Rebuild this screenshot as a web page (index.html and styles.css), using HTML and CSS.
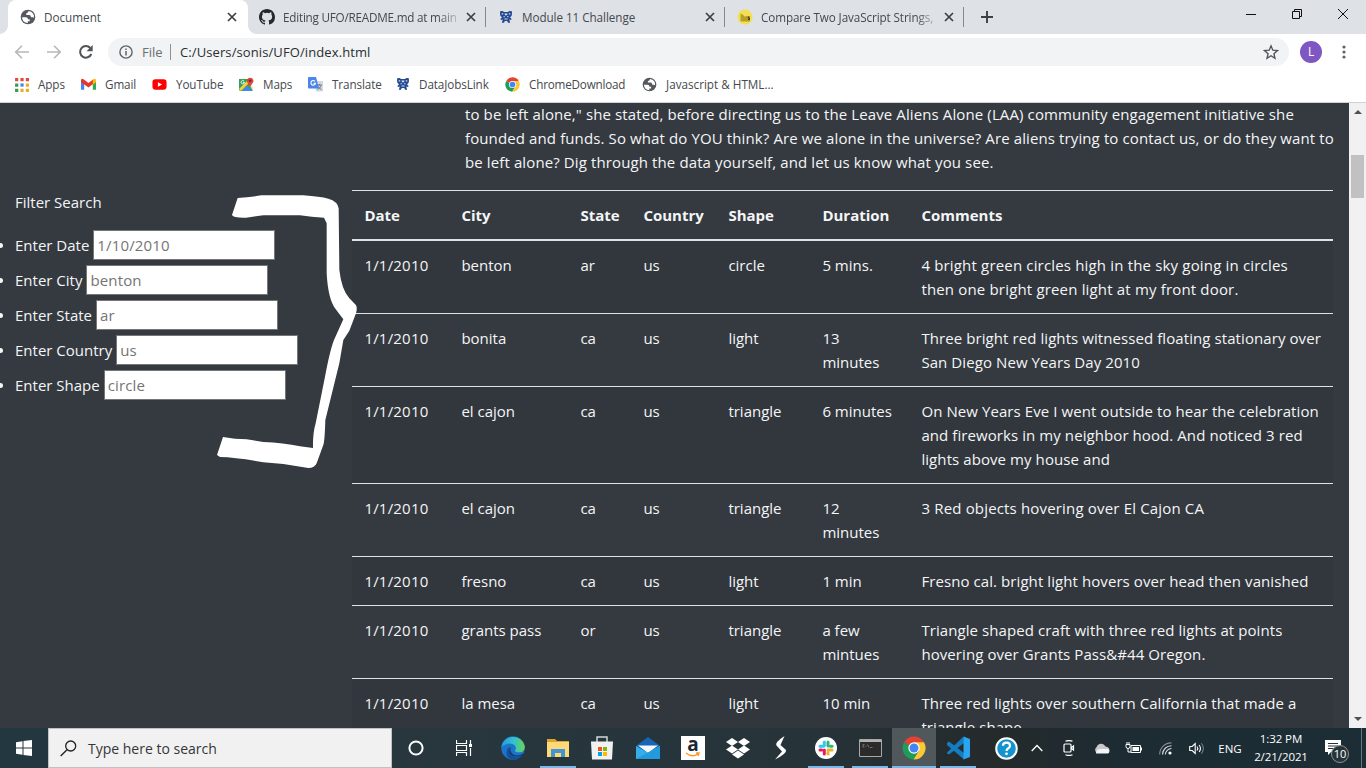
FILE: index.html
```html
<!DOCTYPE html>
<html lang="en">
<head>
<meta charset="utf-8">
<title>Document</title>
<link rel="stylesheet" href="styles.css">
</head>
<body>
<svg class="defs" width="0" height="0">
  <symbol id="globe" viewBox="0 0 16 16"><circle cx="8" cy="8" r="7.300" fill="#55595d"/><path d="M8.500 2.200Q11 2 11.800 3L10.500 4.500Q11 5.800 12.200 6.300L14 6.600Q14.400 9.500 12.700 11.500 12 10.200 10.500 10.300V8.600Q10.300 7.900 9.500 7.900H6.200V6.400H7.700V4.900H9Q9.800 4.700 9.800 4Z" fill="#fff" opacity="0"/><path d="M2 8.200H5.800Q8 8.300 8 10.300H9.700V12.200H7.800V14Q2.600 13.700 2 8.200ZM8.600 2.100Q8.300 4.200 6.300 4.200V5.900H9.500Q10.900 6.200 11 8.300H12.500Q13.500 8.500 13.900 8.800 14.400 6.300 13 4.600 11.500 2.500 8.600 2.100Z" fill="#fff"/></symbol>
  <symbol id="xmark" viewBox="0 0 10 10"><path d="m1 1 8 8M9 1 1 9" stroke="#3c4043" stroke-width="1.700" fill="none"/></symbol>
  <symbol id="robot" viewBox="0 0 14 14"><path d="M1.200 1.200Q4 .5 5 2h4q1-1.500 3.800-.8.500 3-.3 4.800L11 7.200l1.800 2-1.300.8-1-.8v1.300l.7 2.300H9L8.200 11H5.800L5 12.800H2.800l.7-2.300V9.200l-1 .8-1.300-.8 1.800-2L1.500 6Q.7 4.200 1.200 1.200Z" fill="#26488f"/><path d="M2.700 3.300h1.500v1.200H2.700zm7.100 0h1.500v1.200H9.800zM5.500 3.500h3l-.5 1.700H6zM4.500 6.300h1.400v1H4.500zm3.600 0h1.400v1H8.100zM5.500 8.500h3v1h-3z" fill="#d3e2f8"/></symbol>
  <symbol id="chrome" viewBox="0 0 24 24"><path d="M12 12 2.040 6.250A11.500 11.500 0 0 1 21.960 6.250Z" fill="#e34235"/><path d="M12 12 2.040 6.250A11.500 11.500 0 0 0 11.500 23.500L16.800 14.800Z" fill="#1f9d58"/><path d="M12 6.300h9.990A11.500 11.500 0 0 1 11.500 23.500L17 14.800Z" fill="#fcc934"/><circle cx="12" cy="12" r="5.700" fill="#fff"/><circle cx="12" cy="12" r="4.500" fill="#4285f4"/></symbol>
</svg>

<header class="tabs">
  <div class="tab active"><svg class="fav"><use href="#globe"/></svg><span class="tab-title t-doc">Document</span><svg class="close"><use href="#xmark"/></svg></div>
  <div class="tab"><svg class="fav" viewBox="0 0 16 16"><path fill="#24292e" d="M8 0C3.580 0 0 3.580 0 8c0 3.540 2.290 6.530 5.470 7.590.4.070.55-.17.55-.38v-1.490c-2.010.37-2.530-.49-2.690-.94-.09-.23-.48-.94-.82-1.130-.28-.15-.68-.52-.01-.53.63-.01 1.080.58 1.230.82.72 1.210 1.870.87 2.330.66.070-.52.280-.87.510-1.070-1.780-.2-3.640-.89-3.640-3.950 0-.87.310-1.590.82-2.150-.08-.2-.36-1.020.08-2.120 0 0 .67-.21 2.200.82a7.600 7.600 0 0 1 4 0c1.530-1.040 2.200-.82 2.200-.82.440 1.100.16 1.920.08 2.120.51.56.82 1.270.82 2.150 0 3.070-1.870 3.750-3.650 3.950.29.25.54.73.54 1.480v2.200c0 .21.150.46.550.38A8.010 8.010 0 0 0 16 8c0-4.420-3.580-8-8-8Z"/></svg><span class="tab-title t-git">Editing UFO/README.md at main</span><svg class="close"><use href="#xmark"/></svg></div>
  <div class="tab"><svg class="fav small"><use href="#robot"/></svg><span class="tab-title t-mod">Module 11 Challenge</span><svg class="close"><use href="#xmark"/></svg></div>
  <div class="tab"><svg class="fav" viewBox="0 0 16 16"><circle cx="8" cy="8" r="7.500" fill="#f3df55"/><path d="M3.500 4.500 6 5.800 8 8 9 6.800 13 8v4.500H3.500Z" fill="#b5a02c"/><path d="M12.600 7.800h-1.300v1.300h1.200v1.400H11" stroke="#37310b" stroke-width=".9" fill="none"/></svg><span class="tab-title t-cmp">Compare Two JavaScript Strings,</span><svg class="close"><use href="#xmark"/></svg></div>
  <svg class="plus" viewBox="0 0 12 12"><path d="M6 0v12M0 6h12" stroke="#3c4043" stroke-width="1.900"/></svg>
  <div class="win">
    <svg viewBox="0 0 12 12"><path d="M1 6.500h10" stroke="#111"/></svg>
    <svg viewBox="0 0 12 12"><path d="M1.500 3.500h7v7h-7zM3.500 3V1.500h7v7H9" fill="none" stroke="#111"/></svg>
    <svg viewBox="0 0 12 12"><path d="m1 1 10 10M11 1 1 11" stroke="#111" fill="none"/></svg>
  </div>
</header>

<div class="toolbar">
  <svg class="nav" viewBox="0 0 16 16"><path d="M15 8H2M8 1.700 1.700 8 8 14.300" fill="none" stroke="#b6b8bb" stroke-width="1.600"/></svg>
  <svg class="nav" viewBox="0 0 16 16"><path d="M1 8h13M8 1.700 14.300 8 8 14.300" fill="none" stroke="#b6b8bb" stroke-width="1.600"/></svg>
  <svg class="nav" viewBox="0 0 16 16"><path d="M13.300 10A5.800 5.800 0 1 1 12.300 4" fill="none" stroke="#505357" stroke-width="2"/><path d="M14.700 1v6.300H8.500Z" fill="#505357"/></svg>
  <div class="omnibox">
    <svg class="info" viewBox="0 0 14 14"><circle cx="7" cy="7" r="6.100" fill="none" stroke="#5f6368" stroke-width="1.400"/><path d="M7 6v4.500M7 3.400v1.500" stroke="#5f6368" stroke-width="1.500"/></svg>
    <span class="scheme">File</span><span class="address">C:/Users/sonis/UFO/index.html</span>
    <svg class="star" viewBox="0 0 24 24"><path d="m12 2.800 2.700 6.500 7 .6-5.300 4.600 1.600 6.900-6-3.700-6 3.700 1.600-6.900L2.300 9.900l7-.6Z" fill="none" stroke="#505357" stroke-width="2"/></svg>
  </div>
  <div class="avatar">L</div>
  <svg class="dots" viewBox="0 0 4 14"><circle cx="2" cy="2" r="1.600"/><circle cx="2" cy="7" r="1.600"/><circle cx="2" cy="12" r="1.600"/></svg>
</div>

<nav class="bookmarks">
  <a class="bm b1"><svg viewBox="0 0 14 14"><path d="M1 1h3v3H1zM6 1h3v3H6zM11 1h3v3h-3z" fill="#df4b3f"/><path d="M1 6h3v3H1zM1 11h3v3H1z" fill="#3a9b57"/><path d="M6 6h3v3H6z" fill="#4285f4"/><path d="M11 6h3v3h-3zM6 11h3v3H6zM11 11h3v3h-3z" fill="#e8b12c"/></svg><span>Apps</span></a>
  <a class="bm b2"><svg viewBox="0 0 14 14"><path d="M0 3v9h3V4Z" fill="#4285f4"/><path d="M14 3v9h-3V4Z" fill="#34a853"/><path d="M0 3q.3-2 2.400-1L7 5.500 11.600 2v4.300L7 9.800 0 4.800Z" fill="#e2382d"/><path d="M11 2.500q2.500-2 3 .5v2l-3 2.200Z" fill="#fbbc04"/></svg><span>Gmail</span></a>
  <a class="bm b3"><svg viewBox="0 0 16 12"><rect x=".5" y=".5" width="15" height="11" rx="3" fill="#f00"/><path d="m6.300 3.500 4.500 2.500-4.500 2.500Z" fill="#fff"/></svg><span>YouTube</span></a>
  <a class="bm b4"><svg viewBox="0 0 15 15"><path d="M0 2h11v6l3 6H1l-1-1Z" fill="#34a05a"/><path d="m3 14 5-5 5 5Z" fill="#4285f4"/><path d="M0 12 9 3l2 2-9 9Z" fill="#f7cf46"/><path d="m10 7 4 3v4Z" fill="#ddd"/><path d="M11 10 8 5a3.300 3.300 0 1 1 6.300 0Z" fill="#df4939"/><circle cx="11.200" cy="3.800" r="1.300" fill="#7d251d"/><path d="M5 4a1.700 1.700 0 1 0 .5 1.400H4" fill="none" stroke="#fff" stroke-width=".9"/></svg><span>Maps</span></a>
  <a class="bm b5"><svg viewBox="0 0 15 15"><path d="M6 4h9v10.500H8Z" fill="#d5d8dc"/><path d="M9 8h5M11.500 7v1.500m1.500 0q-1 3-3.500 4m.5-3q1.500 2.500 3.500 3" stroke="#65727f" stroke-width=".9" fill="none"/><path d="M1 0h7l3 11.500H1q-1 0-1-1V1q0-1 1-1Z" fill="#4a84ec"/><path d="M7 4.300a2.300 2.300 0 1 0 .5 2H5.400" stroke="#fff" stroke-width="1.100" fill="none"/></svg><span>Translate</span></a>
  <a class="bm b6"><svg><use href="#robot"/></svg><span>DataJobsLink</span></a>
  <a class="bm b7"><svg><use href="#chrome"/></svg><span>ChromeDownload</span></a>
  <a class="bm b8"><svg><use href="#globe"/></svg><span>Javascript &amp; HTML...</span></a>
</nav>

<main class="viewport">
  <div class="page">
    <p class="article">to be left alone," she stated, before directing us to the Leave Aliens Alone (LAA) community engagement initiative she<br>founded and funds. So what do YOU think? Are we alone in the universe? Are aliens trying to contact us, or do they want to<br>be left alone? Dig through the data yourself, and let us know what you see.</p>
    <div class="columns">
      <form class="filters">
        <p>Filter Search</p>
        <ul>
          <li><label for="date">Enter Date</label><input id="date" placeholder="1/10/2010"></li>
          <li><label for="city">Enter City</label><input id="city" placeholder="benton"></li>
          <li><label for="state">Enter State</label><input id="state" placeholder="ar"></li>
          <li><label for="country">Enter Country</label><input id="country" placeholder="us"></li>
          <li><label for="shape">Enter Shape</label><input id="shape" placeholder="circle"></li>
        </ul>
      </form>
      <table>
        <colgroup><col class="c1"><col class="c2"><col class="c3"><col class="c4"><col class="c5"><col class="c6"><col></colgroup>
        <thead><tr><th>Date</th><th>City</th><th>State</th><th>Country</th><th>Shape</th><th>Duration</th><th>Comments</th></tr></thead>
        <tbody>
          <tr><td>1/1/2010</td><td>benton</td><td>ar</td><td>us</td><td>circle</td><td>5 mins.</td><td class="wide">4 bright green circles high in the sky going in circles<br>then one bright green light at my front door.</td></tr>
          <tr><td>1/1/2010</td><td>bonita</td><td>ca</td><td>us</td><td>light</td><td>13<br>minutes</td><td>Three bright red lights witnessed floating stationary over<br>San Diego New Years Day 2010</td></tr>
          <tr><td>1/1/2010</td><td>el cajon</td><td>ca</td><td>us</td><td>triangle</td><td>6 minutes</td><td>On New Years Eve I went outside to hear the celebration<br>and fireworks in my neighbor hood. And noticed 3 red<br>lights above my house and</td></tr>
          <tr><td>1/1/2010</td><td>el cajon</td><td>ca</td><td>us</td><td>triangle</td><td>12<br>minutes</td><td class="wide">3 Red objects hovering over El Cajon CA</td></tr>
          <tr><td>1/1/2010</td><td>fresno</td><td>ca</td><td>us</td><td>light</td><td>1 min</td><td>Fresno cal. bright light hovers over head then vanished</td></tr>
          <tr><td>1/1/2010</td><td>grants pass</td><td>or</td><td>us</td><td>triangle</td><td>a few<br>mintues</td><td>Triangle shaped craft with three red lights at points<br>hovering over Grants Pass&amp;#44 Oregon.</td></tr>
          <tr><td>1/1/2010</td><td>la mesa</td><td>ca</td><td>us</td><td>light</td><td>10 min</td><td>Three red lights over southern California that made a<br>triangle shape.</td></tr>
        </tbody>
      </table>
    </div>
    <svg class="brace" viewBox="0 0 1110 900"><path fill="#fff" d="M713 54Q750 52 785 46L910 46Q960 50 985 56Q1013 64 1016 85L1018 270Q1025 330 1048 355L1067 374Q1073 380 1068 400L1048 452L1030 480L1018 550L976 720Q974 790 969 797L950 850Q944 864 925 864L850 852L790 847Q710 832 660 831L651 825L669 771Q705 778 740 778L790 786Q850 788 900 799L939 804Q938 760 947 730L975 590Q990 510 1002 480L1030 418L1005 385Q984 355 980 280L980 130L972 113Q935 112 900 106L790 106L738 113Q700 114 696 105Z"/></svg>
  </div>
  <div class="scrollbar"><i class="up"></i><i class="thumb"></i><i class="down"></i></div>
</main>

<footer class="taskbar">
  <div class="tb"><svg width="16" height="16" viewBox="0 0 16 16"><path d="m0 2.200 6.500-.9v6.200H0zM7.500 1.100 16 0v7.500H7.500zM0 8.500h6.500v6.200L0 13.800zM7.500 8.500H16V16l-8.500-1.100z" fill="#fff"/></svg></div>
  <div class="search"><svg width="17" height="17" viewBox="0 0 17 17"><circle cx="10.700" cy="6" r="5" fill="none" stroke="#222" stroke-width="1.300"/><path d="M7 9.700.7 16" stroke="#222" stroke-width="1.400"/></svg><span>Type here to search</span></div>
  <div class="tb"><svg width="16" height="16" viewBox="0 0 16 16"><circle cx="8" cy="8" r="6.600" fill="none" stroke="#fff" stroke-width="2"/></svg></div>
  <div class="tb"><svg width="16" height="16" viewBox="0 0 16 16"><path d="M.5 0v3.500h10V0M.5 5.500h10v5H.5zM.5 16v-3.500h10V16M14.500 0v4M14.500 8v8" fill="none" stroke="#fff" stroke-width="1.200"/><path d="M13 4h3v3h-3z" fill="#fff"/></svg></div>
  <div class="tb edge"><svg width="24" height="24" viewBox="0 0 24 24"><defs><linearGradient id="eg"><stop offset="0" stop-color="#239de0"/><stop offset=".55" stop-color="#35c3c9"/><stop offset="1" stop-color="#6bd451"/></linearGradient></defs><circle cx="12" cy="12" r="11.800" fill="#1b74c9"/><path d="M.3 11A12 12 0 0 1 23.800 10Q24 16 18.500 16.300 14 16.500 14 14.500 16 12 13.500 9 8 5 .3 11Z" fill="url(#eg)"/><path d="M9 11Q7 17 12 20q5 3 10-2-4 6-10 6Q6 23 5.500 17 5.500 12 9 11Z" fill="#144f9a"/><path d="M10 11q-2 4 1.500 7 4 3 9.500.3l1.200-.8q1 .1.200 1-3 2-6 2-7 0-8-5Q8 12 10 11Z" fill="#10325e"/></svg></div>
  <div class="tb expl open"><svg width="22" height="20" viewBox="0 0 22 20"><path d="M0 1h8l2 2h12v16H0Z" fill="#dca32d"/><path d="M0 4h22v15H0Z" fill="#ffd978"/><path d="M4 19v-8h14v8h-4v-4H8v4Z" fill="#4295d1"/></svg></div>
  <div class="tb store"><svg width="24" height="24" viewBox="0 0 24 24"><path d="M7 6V1h10v5" fill="none" stroke="#d4d7d9" stroke-width="1.500"/><path d="M1 5.500h22l-1 18H2Z" fill="#f1f1f1"/><path d="M8 11h4v4H8z" fill="#f25022"/><path d="M13 11h4v4h-4z" fill="#7fba00"/><path d="M8 16h4v4H8z" fill="#00a4ef"/><path d="M13 16h4v4h-4z" fill="#ffb900"/></svg></div>
  <div class="tb mail"><svg width="24" height="24" viewBox="0 0 24 24"><path d="M0 10 12 1l12 9v13H0Z" fill="#1765b4"/><path d="M2 9.500h20L12 17Z" fill="#f4f6f8"/><path d="M0 10 12 17 24 10v13H0Z" fill="#36afe9"/><path d="M0 23 24 10v13Z" fill="#229bdc"/></svg></div>
  <div class="tb amz"><span>a</span><svg width="16" height="6" viewBox="0 0 16 6"><path d="M1 1q6 5 12 1M11 1h3l-1 3" fill="none" stroke="#f79b24" stroke-width="1.400"/></svg></div>
  <div class="tb dbx"><svg width="24" height="22" viewBox="0 0 24 22"><path d="m6 1 6 4-6 4-6-4zM18 1l6 4-6 4-6-4zM0 12.500l6-4 6 4-6 4zM18 8.500l6 4-6 4-6-4zM6 17.500l6-4 6 4-6 4z" fill="#fff"/></svg></div>
  <div class="tb ess"><svg width="14" height="24" viewBox="0 0 14 24"><path d="M10.500 0Q.5 6.500 2.500 9.500L8 15.500 1 23.500Q13 17.500 12 14L6.500 9Z" fill="#fff"/></svg></div>
  <div class="tb slack open"><svg width="22" height="22" viewBox="0 0 22 22"><circle cx="11" cy="11" r="11" fill="#fff"/><g fill="none" stroke-width="3" stroke-linecap="round"><path d="M9.300 5v3.700M5 9.300h3.300" stroke="#36c5f0"/><path d="M13 5v4M15.500 9.300h1.600" stroke="#2eb67d"/><path d="M13 13h4M13 15.500v1.600" stroke="#ecb22e"/><path d="M9.300 13v4M5 13h1.600" stroke="#e01e5a"/></g></svg></div>
  <div class="tb cmd open"><svg width="23" height="18" viewBox="0 0 23 18"><path d="M.5.500h22v17H.5z" fill="#2b2b2b" stroke="#a8a8a8"/><path d="M1 1h21v2H1z" fill="#b2b2b2"/><path d="M5.500 5.500H4v2.500h1.500M7 6v.500m0 1v.500M8.500 5.500l1.500 3M11 8.500h2.500" fill="none" stroke="#8c8c8c" stroke-width=".7"/></svg></div>
  <div class="tb chr open"><svg width="24" height="24"><use href="#chrome"/></svg></div>
  <div class="tb vsc open"><svg width="24" height="24" viewBox="0 0 24 24"><path d="m1 7 2-1.500L18 17v6.500L1 9ZM1 16.500 17.500.500 18 7 3 18.500l-2-1Z" fill="#147dc2"/><path d="M17.500.500 24 3v18l-6.500 2.500Z" fill="#2ba5ee"/></svg></div>
  <div class="tb help"><svg width="23" height="23" viewBox="0 0 23 23"><circle cx="11.500" cy="11.500" r="10.300" fill="#1593cf" stroke="#fff" stroke-width="2"/><path d="M8 8.800Q8 5.700 11.500 5.700T15 8.800Q15 10.300 13 11.500 11.500 12.400 11.500 14" fill="none" stroke="#fff" stroke-width="2.200"/><circle cx="11.500" cy="16.800" r="1.400" fill="#fff"/></svg></div>
  <div class="tb tray"><svg width="12" height="8" viewBox="0 0 12 8"><path d="m.700 7 5.300-5.500L11.300 7" fill="none" stroke="#fff" stroke-width="1.300"/></svg></div>
  <div class="tb tray"><svg width="12" height="16" viewBox="0 0 12 16"><path d="M2.500 1.300q3.500-1.500 7 0M2.500 14.700q3.500 1.500 7 0M1 5q0-1 1-1h5q1 0 1 1v6q0 1-1 1H2q-1 0-1-1zM8.500 7.500l2-1.500v4l-2-1.500" fill="none" stroke="#fff" stroke-width="1.200"/></svg></div>
  <div class="tb tray"><svg width="17" height="11" viewBox="0 0 17 11"><path d="M4 10a3.500 3.500 0 0 1-.3-6A4.800 4.800 0 0 1 12.500 3.500Q16.500 4 16.500 7.500T14 10Z" fill="#c7c9ca"/><path d="M3 10.500Q3 6.500 7 6L15.500 6Q17.500 10 14 10.500Z" fill="#f5f5f5"/></svg></div>
  <div class="tb tray"><svg width="17" height="13" viewBox="0 0 17 13"><path d="M1 2.500v2q0 2 2 2t2-2v-2zM2 2.500V0M4 2.500V0M3 6.500v3.500h3M6 3.500h9.500v7H6zM16.500 5.500v3" fill="none" stroke="#fff"/><path d="M7.500 5H14v4H7.500z" fill="#fff"/></svg></div>
  <div class="tb wifi"><svg width="13" height="13" viewBox="0 0 13 13"><g fill="none" stroke="#d8dcdd" stroke-width="1.100"><path d="M.7 12.500A11.500 11.500 0 0 1 12.500.9" opacity=".55"/><path d="M3.500 12.500A9 9 0 0 1 12.500 3.700M6.300 12.500A6.300 6.300 0 0 1 12.500 6.500"/></g><circle cx="11" cy="11" r="1.600" fill="#fff"/></svg></div>
  <div class="tb spk"><svg width="16" height="13" viewBox="0 0 16 13"><path d="M.7 4.500h2.500l3-3v10l-3-3H.7zM8 4.500q1.500 2 0 4M10.200 3q2.500 3.500 0 7" fill="none" stroke="#fff" stroke-width="1.100"/><path d="M12.500 1.300q3.700 5 0 10.400" fill="none" stroke="#829097"/></svg></div>
  <div class="tb lang">ENG</div>
  <div class="tb clock"><span>1:32 PM</span><span>2/21/2021</span></div>
  <div class="tb note"><svg width="18" height="16" viewBox="0 0 18 16"><path d="M1 1h16v12H7l-3 3v-3H1Z" fill="#fff"/><path d="M4 4.500h10M4 7h10M4 9.500h6" stroke="#26343a"/></svg><b>10</b></div>
  <i class="peek"></i>
</footer>
</body>
</html>
```
FILE: styles.css
```css
* { box-sizing: border-box; }
body {
  margin: 0; width: 1366px; height: 768px; overflow: hidden;
  display: flex; flex-direction: column;
  font-family: "Open Sans", "Noto Sans", sans-serif; background: #fff;
}
svg { display: block; flex: none; }
.defs { position: absolute; }

.tabs { height: 34px; display: flex; background: #dee1e6; padding-left: 8px; font-size: 12px; color: #45494d; flex: none; }
.tab { width: 239px; display: flex; align-items: center; padding: 0 10px 0 12px; position: relative; }
.tab:not(.active)::after { content: ""; position: absolute; right: 0; top: 7px; height: 20px; width: 1px; background: #85898d; }
.tab.active { background: #fff; border-radius: 8px 8px 0 0; width: 240px; margin-right: -1px; padding-right: 11px; }
.tab.active::before, .tab.active::after { content: ""; position: absolute; bottom: 0; width: 8px; height: 8px; }
.tab.active::before { left: -8px; background: radial-gradient(circle at 0 0, #dee1e6 7.500px, #fff 8px); }
.tab.active::after { right: -8px; background: radial-gradient(circle at 100% 0, #dee1e6 7.500px, #fff 8px); }
.fav { width: 16px; height: 16px; margin-right: 8px; }
.fav.small { padding: 1px; }
.tab-title { flex: 1; min-width: 0; white-space: nowrap; font-size: 11.700px; }
.t-git { letter-spacing: -.22px; margin-right: 5px; -webkit-mask-image: linear-gradient(90deg, #000 87%, rgba(0,0,0,.15) 99%); mask-image: linear-gradient(90deg, #000 87%, rgba(0,0,0,.15) 99%); }
.t-cmp { letter-spacing: -.1px; margin-right: 5px; -webkit-mask-image: linear-gradient(90deg, #000 87%, rgba(0,0,0,.3) 97%); mask-image: linear-gradient(90deg, #000 87%, rgba(0,0,0,.3) 97%); }
.t-mod { letter-spacing: -.06px; }
.close { width: 10px; height: 10px; }
.plus { width: 12px; height: 12px; margin: 11px 0 0 17px; }
.win { margin-left: auto; display: flex; gap: 34px; padding: 8px 17px 0 0; }
.win svg { width: 12px; height: 12px; }

.toolbar { height: 34px; flex: none; display: flex; align-items: center; padding: 2px 20px 0 14px; }
.nav { width: 16px; height: 16px; margin-right: 16px; }
.nav + .nav + .nav { margin-right: 14px; }
.omnibox { width: 1182px; height: 28px; border-radius: 14px; background: #f1f3f4; display: flex; align-items: center; padding: 0 10px 0 11px; font-size: 13px; }
.info { width: 14px; height: 14px; margin-right: 9px; }
.scheme { color: #6b6f73; border-right: 1px solid #8f9295; line-height: 16px; width: 29px; margin-right: 9px; }
.address { color: #2b2e31; white-space: nowrap; letter-spacing: .1px; }
.star { width: 16px; height: 16px; margin-left: auto; }
.avatar { width: 22px; height: 22px; border-radius: 50%; background: #7e57c2; color: #fff; font-size: 12px; line-height: 22px; text-align: center; margin-left: 11px; }
.dots { width: 4px; height: 14px; margin-left: 20px; fill: #5f6368; }

.bookmarks { height: 35px; flex: none; border-bottom: 1px solid #cfd1d4; display: flex; padding: 0 0 2px 14px; font-size: 11.700px; color: #45494d; }
.bm { display: flex; align-items: center; gap: 9px; white-space: nowrap; letter-spacing: -.1px; }
.bm span { margin-top: -1px; }
.bm svg { width: 15px; height: 15px; }
.b1 { width: 67px; }
.b2 { width: 71px; }
.b3 { width: 87px; }
.b4 { width: 69px; }
.b5 { width: 88px; }
.b6 { width: 109px; }
.b6 svg { width: 14px; height: 14px; }
.b7 { width: 137px; }
.b7 { letter-spacing: -.2px; }
.b8 { letter-spacing: 0; }

.viewport { flex: 1; min-height: 0; display: flex; background: #343a40; color: #f4f5f6; overflow: hidden; }
.page { width: 1349px; position: relative; font-size: 15px; line-height: 24px; }
.article { margin: -1px 0 16px 465px; white-space: nowrap; letter-spacing: .115px; }
.columns { display: flex; }
.filters { width: 352px; padding-left: 15px; flex: none; }
.filters p { margin: 0 0 13px; }
.filters ul { list-style: none; margin: 0; padding: 0; }
.filters li { height: 35px; display: flex; align-items: center; gap: 4px; position: relative; }
.filters li::before { content: ""; position: absolute; left: -17px; top: 16px; width: 5px; height: 5px; border-radius: 50%; background: #f4f5f6; }
.filters input { width: 182px; height: 30px; border: 1px solid #767676; padding: 1px 3px; background: #fff; font: 15px "Open Sans", sans-serif; letter-spacing: .15px; }
.filters input::placeholder { color: #757575; }
table { width: 981px; table-layout: fixed; border-spacing: 0; border-top: 1px solid #dee2e6; flex: none; align-self: flex-start; }
.c1 { width: 97px; } .c2 { width: 119px; } .c3 { width: 63px; } .c4 { width: 85px; } .c5 { width: 94px; } .c6 { width: 99px; }
th, td { padding: 12px 12px 12px 12.400px; text-align: left; vertical-align: top; white-space: nowrap; }
td:first-child { letter-spacing: .2px; }
td:last-child { letter-spacing: .08px; }
td.wide:last-child { letter-spacing: .17px; }
th { border-bottom: 2px solid #dee2e6; font-weight: 700; }
tr + tr td { border-top: 1px solid #dee2e6; }
tbody tr:nth-child(odd) { background: #32373d; }
.brace { position: absolute; left: 0; top: 77px; width: 370px; height: 300px; }
.scrollbar { width: 17px; background: #f1f1f1; display: flex; flex-direction: column; align-items: center; }
.up, .down { border: 4px solid transparent; }
.up { border-bottom-color: #505050; border-top: 0; margin-top: 7px; }
.thumb { width: 13px; height: 43px; background: #c1c1c1; margin-top: 41px; }
.down { border-top-color: #505050; border-bottom: 0; margin: auto 0 7px; }

.taskbar { height: 40px; flex: none; display: flex; background: linear-gradient(90deg, #233740, #27373d 30%, #26343a 58%, #252a2b 73%, #1d2c33 82%, #1c2d35); color: #fff; }
.tb { width: 48px; display: flex; align-items: center; justify-content: center; position: relative; }
.search { width: 344px; border: 1px solid #bfc1c3; background: #f1f1f1; color: #33373a; display: flex; align-items: center; gap: 11px; padding-left: 11px; font-size: 14px; }
.open::after { content: ""; position: absolute; bottom: 0; height: 2px; width: 36px; background: #76b9ed; }
.tb + .search + .tb { width: 48px; }
.search + .tb + .tb { width: 47px; }
.edge { width: 52px; } .expl { width: 38px; } .store { width: 50px; } .mail { width: 42px; }
.amz { width: 24px; height: 24px; margin: 8px 12px; background: #fff; flex-direction: column; }
.amz span { color: #1c2530; font: 700 19px/15px "Open Sans", sans-serif; margin-top: -2px; }
.dbx { width: 42px; } .ess { width: 44px; } .slack { width: 46px; } .cmd { width: 42px; }
.chr { width: 44px; margin: 0 1px; background: #50585c; }
.chr::after { width: 44px; }
.vsc { width: 42px; }
.help { width: 30px; margin-left: 12px; }
.tray { width: 32px; } .wifi { width: 33px; } .spk { width: 29px; }
.lang { width: 38px; font-size: 11.500px; }
.clock { width: 64px; flex-direction: column; font-size: 11.500px; line-height: 18px; white-space: nowrap; letter-spacing: -.08px; }
.note { width: 42px; padding: 0 2px 2px 0; }
.note b { position: absolute; left: 18px; top: 17px; width: 18px; height: 18px; border-radius: 50%; border: 1px solid #8b9599; background: #26343a; font: 11px/16px "Open Sans", sans-serif; text-align: center; }
.peek { width: 1px; margin-left: 6px; background: #66757b; }
```
